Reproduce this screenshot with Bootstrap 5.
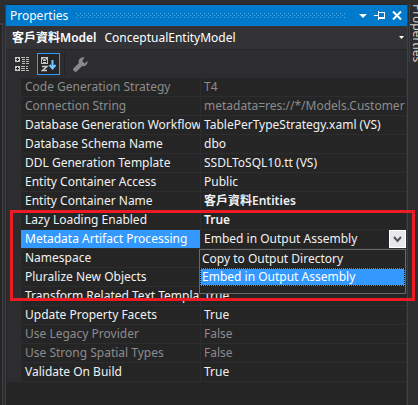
<!DOCTYPE html>
<html lang="en">
<head>
<meta charset="utf-8">
<meta name="viewport" content="width=device-width, initial-scale=1">
<title>Properties</title>
<link href="https://cdn.jsdelivr.net/npm/bootstrap@5.3.0/dist/css/bootstrap.min.css" rel="stylesheet">
<style>
body{background:#2d2d30;color:#f1f1f1;font:12px/18px "Noto Sans","Noto Sans CJK TC",sans-serif;overflow:hidden}
button,select{font:inherit;color:inherit}
.left-dock{width:5px;padding-top:23px}
.left-dock div{width:3px;border-top:2px solid #3f3f46;border-right:1px solid #3f3f46;background:#252526}
.pane{border:1px solid #3f3f46;border-top-color:#252526;border-bottom:0;margin-top:4px;min-width:0}
.title{height:21px;background:#007acc;padding:0 2px 0 4px}
.title h1{font-size:12px;line-height:20px;color:#fff}
.grip{height:5px;margin:0 8px;background:conic-gradient(from 270deg at 1px 1px,#59b0e6 90deg,transparent 0) 0 0/4px 4px,conic-gradient(from 270deg at 1px 1px,#59b0e6 90deg,transparent 0) 2px 2px/4px 4px}
.flat{background:none;border:0;padding:0;display:flex;align-items:center;justify-content:center}
.title .flat{width:17px;height:18px}
.object{height:24px;background:#333337;padding:0 3px 0 6px;border-bottom:1px solid #252526;color:#fff}
.tools{height:28px;padding:0 5px;gap:4px}
.tools .flat{width:22px;height:22px}
.tools .on{width:23px;border:1px solid #3399ff;background:#252526}
.tools .rule{width:1px;height:20px;background:#222224}
.sheet{background:#252526;border-left:1px solid #252526;border-right:1px solid #2d2d30}
.grid{width:100%;table-layout:fixed;border-collapse:separate;border-spacing:0}
.grid th,.grid td{height:19px;padding:0 0 0 4px;line-height:18px;font-weight:400;white-space:nowrap;overflow:hidden;border-bottom:1px solid #2d2d30}
.grid th{width:194px;border-left:14px solid #2d2d30;border-right:1px solid #2d2d30}
.grid td{padding-left:3px}
.grid .off th,.grid .off td{color:#8c8c8c}
.grid .sel th{background:#3399ff;color:#fff;background-clip:padding-box}
.grid .bold td{font-weight:600}
.pick select{appearance:none;background:none;border:0;padding:0;height:18px;min-width:0;outline:0}
.pick .flat{width:17px;height:18px;background:#e8e8ec;border:1px solid #fff}
.menu{top:171px;left:192px;right:0;height:45px;background:#252526;border:1px solid #686868;z-index:2}
.menu .flat{width:100%;height:18px;justify-content:start;padding-left:2px}
.menu .on{background:#3399ff;color:#fff;outline:1px dotted #111;outline-offset:-1px}
.frame{top:132px;left:3px;right:-9px;height:91px;border:3px solid #ed1c24;z-index:3;pointer-events:none}
.right-dock{width:10px;padding:4px 0 0 1px}
.right-dock a{writing-mode:vertical-rl;line-height:14px;color:#d0d0d0;border-left:1px solid #3f3f46;white-space:nowrap}
</style>
<script src="https://cdn.jsdelivr.net/npm/bootstrap@5.3.0/dist/js/bootstrap.bundle.min.js"></script>
</head>
<body>
<div class="d-flex vh-100">
<div class="left-dock d-flex flex-shrink-0"><div></div></div>
<main class="pane flex-grow-1 d-flex flex-column">
<header class="title d-flex align-items-center">
<h1 class="m-0 fw-normal">Properties</h1><div class="grip flex-grow-1"></div>
<button class="flat" aria-label="Window options"><svg width="8" height="4"><path d="M0 0h8L4 4z" fill="#fff"/></svg></button>
<button class="flat" aria-label="Auto hide"><svg width="12" height="9" fill="#fff" shape-rendering="crispEdges"><path d="M0 4h4v1H0zM4 0h1v9H4zM5 1h6v1H5zM10 1h1v7h-1zM5 6h6v2H5z"/></svg></button>
<button class="flat" aria-label="Close"><svg width="10" height="9"><path d="M1 .5l8 8M9 .5l-8 8" stroke="#fff" stroke-width="2"/></svg></button>
</header>
<div class="object d-flex align-items-center"><span class="fw-semibold">客戶資料Model</span><span class="ms-2 flex-grow-1">ConceptualEntityModel</span>
<button class="flat" aria-label="Choose object"><svg width="5" height="3"><path d="M0 0h5L2.500 3z" fill="#fff"/></svg></button></div>
<div class="tools d-flex align-items-center">
<button class="flat" aria-label="Categorized"><svg width="14" height="14" shape-rendering="crispEdges"><path d="M0 0h5v5H0zM0 9h5v5H0z" fill="#c8c8c8"/><path d="M1 2h3v1H1zM2 1h1v3H2zM1 11h3v1H1zM2 10h1v3H2z" fill="#222"/><path d="M6 .5h4m1 0h3M7 2.500h3m1 0h3M7 4.500h3m1 0h3M7 6.500h3m1 0h3M6 9.500h4m1 0h2M6 11.500h4m1 0h2M6 13.500h4m1 0h3" stroke="#b8b8b8"/></svg></button>
<button class="flat on" aria-label="Alphabetical"><svg width="16" height="15"><path d="M0 0h7v7H0z" fill="#c8c8c8"/><path d="M1.500 6V3l2-2 2 2v3M2 4.500h3" stroke="#222" fill="none"/><path d="M1 9.500h5L1.500 13.500H6" stroke="#c8c8c8" stroke-width="1.500" fill="none"/><path d="M11.500 3v8M8.500 8l3 3.500 3-3.500" stroke="#75c7ff" stroke-width="2" fill="none"/></svg></button>
<span class="rule"></span>
<button class="flat" aria-label="Property pages"><svg width="15" height="15"><path d="M2.500 12.500l6-6" stroke="#8a8a8a" stroke-width="4.500" stroke-linecap="round"/><path d="M11.500.5a4.500 4.500 0 1 0 3 3.500l-3 2.500-2.500-2z" fill="#8a8a8a"/></svg></button>
</div>
<div class="sheet position-relative flex-grow-1">
<table class="grid"><tbody>
<tr class="off"><th scope="row">Code Generation Strategy</th><td>T4</td></tr>
<tr class="off"><th scope="row">Connection String</th><td>metadata=res://*/Models.Customer</td></tr>
<tr><th scope="row">Database Generation Workflow</th><td>TablePerTypeStrategy.xaml (VS)</td></tr>
<tr><th scope="row">Database Schema Name</th><td>dbo</td></tr>
<tr><th scope="row">DDL Generation Template</th><td>SSDLToSQL10.tt (VS)</td></tr>
<tr><th scope="row">Entity Container Access</th><td>Public</td></tr>
<tr class="bold"><th scope="row">Entity Container Name</th><td>客戶資料Entities</td></tr>
<tr class="bold"><th scope="row">Lazy Loading Enabled</th><td>True</td></tr>
<tr class="sel"><th scope="row"><label for="artifact">Metadata Artifact Processing</label></th><td><div class="pick d-flex"><select id="artifact" class="flex-grow-1"><option>Copy to Output Directory</option><option selected>Embed in Output Assembly</option></select><button class="flat" aria-label="Open list"><svg width="9" height="7"><path d="M1 1l3.500 4L8 1" fill="none" stroke="#555" stroke-width="2"/></svg></button></div></td></tr>
<tr><th scope="row">Namespace</th><td></td></tr>
<tr><th scope="row">Pluralize New Objects</th><td></td></tr>
<tr><th scope="row">Transform Related Text Templates</th><td>True</td></tr>
<tr><th scope="row">Update Property Facets</th><td>True</td></tr>
<tr class="off"><th scope="row">Use Legacy Provider</th><td>False</td></tr>
<tr class="off"><th scope="row">Use Strong Spatial Types</th><td>False</td></tr>
<tr><th scope="row">Validate On Build</th><td>True</td></tr>
</tbody></table>
<div class="menu position-absolute"><button class="flat">Copy to Output Directory</button><button class="flat on">Embed in Output Assembly</button></div>
<div class="frame position-absolute"></div>
</div>
</main>
<aside class="right-dock flex-shrink-0"><a href="#" class="text-decoration-none">Properties</a></aside>
</div>
</body>
</html>
